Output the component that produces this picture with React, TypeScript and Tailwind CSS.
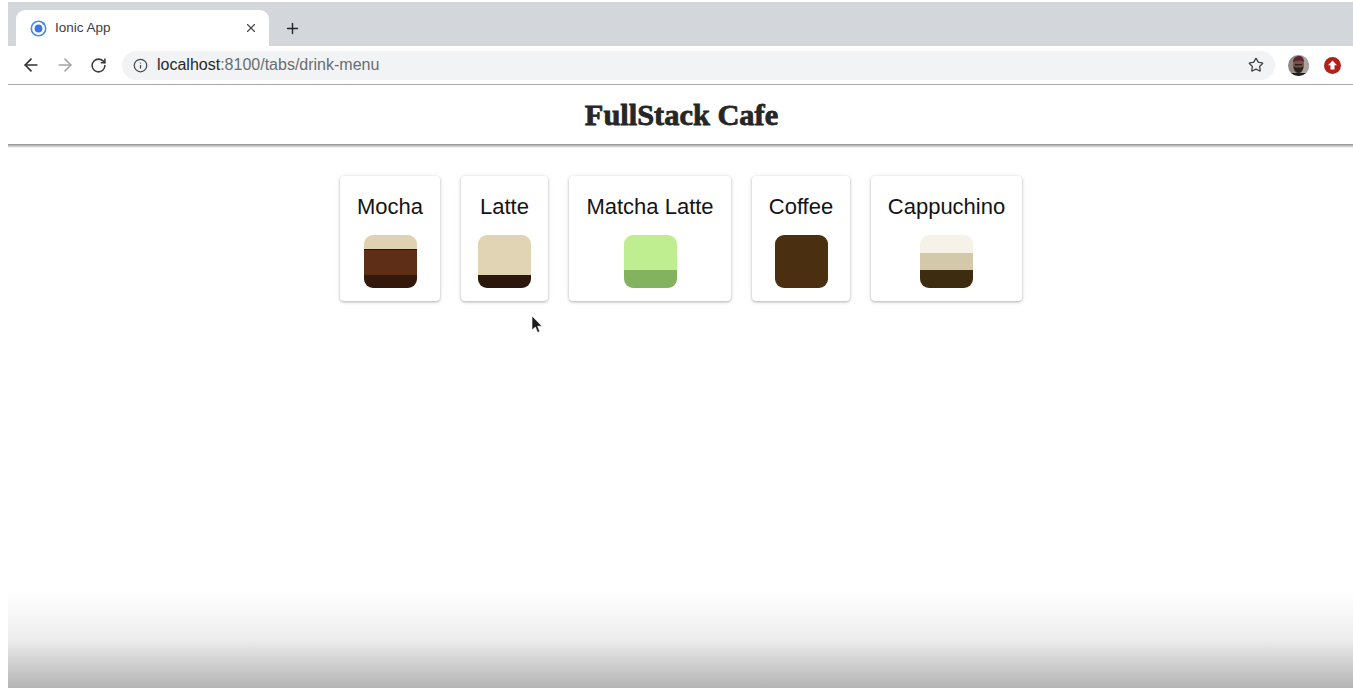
import { ArrowLeft, ArrowRight, Info, Plus, RotateCw, Star, X } from 'lucide-react';

type Layer = { className: string };

type Drink = {
  name: string;
  width: string;
  layers: Layer[];
};

const drinks: Drink[] = [
  {
    name: 'Mocha',
    width: 'w-[100px]',
    layers: [
      { className: 'h-[14px] bg-[#dfd2b2]' },
      { className: 'h-[1px] bg-[#2e1709]' },
      { className: 'h-[25px] bg-[#5f2e16]' },
      { className: 'h-[13px] bg-[#33190c]' }
    ]
  },
  {
    name: 'Latte',
    width: 'w-[87px]',
    layers: [
      { className: 'h-[40px] bg-[#e0d4b4]' },
      { className: 'h-[13px] bg-[#2c170c]' }
    ]
  },
  {
    name: 'Matcha Latte',
    width: 'w-[162px]',
    layers: [
      { className: 'h-[35px] bg-[#bfee90]' },
      { className: 'h-[18px] bg-[#84b35f]' }
    ]
  },
  {
    name: 'Coffee',
    width: 'w-[98px]',
    layers: [{ className: 'h-[53px] bg-[#4a2f11]' }]
  },
  {
    name: 'Cappuchino',
    width: 'w-[151px]',
    layers: [
      { className: 'h-[18px] bg-[#f6f2e7]' },
      { className: 'h-[17px] bg-[#d4c8aa]' },
      { className: 'h-[18px] bg-[#3d2c10]' }
    ]
  }
];

const IonicLogo = () => (
  <svg width="17" height="17" viewBox="0 0 17 17">
    <circle cx="8.5" cy="8.5" r="7.2" fill="none" stroke="#4a8bec" strokeWidth="1.6" />
    <circle cx="8.5" cy="8.5" r="3.9" fill="#3f74e4" />
    <circle cx="13.4" cy="3.6" r="1.2" fill="#4a8bec" />
  </svg>
);

const Avatar = () => (
  <svg width="21" height="21" viewBox="0 0 21 21">
    <clipPath id="avatar-clip">
      <circle cx="10.5" cy="10.5" r="10.5" />
    </clipPath>
    <g clipPath="url(#avatar-clip)">
      <rect width="21" height="21" fill="#8f8a85" />
      <rect x="14" width="7" height="21" fill="#a9a49e" />
      <ellipse cx="10.5" cy="9.5" rx="5.5" ry="7" fill="#7a4f45" />
      <path d="M5 7c0-4 3-6 6-6s5 2 5 6c-3-2-7-2-11 0z" fill="#5a2630" />
      <path d="M5.5 11c1 1 2 1.5 5 1.5s4-.5 5-1.5c0 4-2 7-5 7s-5-3-5-7z" fill="#2b2220" />
      <rect x="7" y="9" width="7" height="1.4" fill="#2b2220" />
      <rect x="3" y="18" width="15" height="3" fill="#24201f" />
    </g>
  </svg>
);

const UpdateBadge = () => (
  <svg width="17" height="17" viewBox="0 0 17 17">
    <circle cx="8.5" cy="8.5" r="8.5" fill="#b3201c" />
    <path d="M8.5 3.6 13 8.2h-2.5v4.2h-4V8.2H4z" fill="#fff" />
  </svg>
);

const Cursor = () => (
  <svg width="13" height="20" viewBox="0 0 13 20">
    <path d="M1 1v14l3.4-3 2.2 5.4 2.2-1-2.2-5.2h4.4z" fill="#1c1c1c" stroke="#ffffff" strokeWidth="0.6" />
  </svg>
);

const DrinkCard = ({ drink }: { drink: Drink }) => (
  <div
    className={`${drink.width} flex h-[125px] flex-col items-center rounded-[4px] bg-white pt-[18px] shadow-[0_1px_3px_rgba(0,0,0,0.3),0_0_8px_rgba(0,0,0,0.04)]`}
  >
    <div className="h-[26px] whitespace-nowrap text-[22px] leading-[26px] text-[#141414]">
      {drink.name}
    </div>
    <div className="mt-[15px] flex h-[53px] w-[53px] flex-col overflow-hidden rounded-[9px]">
      {drink.layers.map((layer, index) => (
        <div key={index} className={layer.className} />
      ))}
    </div>
  </div>
);

export default function App() {
  return (
    <div className="relative h-[688px] w-[1353px] overflow-hidden bg-white pl-2 pt-[2px] font-['Liberation_Sans',Arial,sans-serif]">
      {/* tab strip */}
      <div className="flex h-[44px] items-end bg-[#d3d6da] pl-2">
        <div className="relative flex h-[36px] w-[253px] items-center rounded-t-[9px] bg-white pl-[14px] pr-[11px]">
          <IonicLogo />
          <span className="ml-2 text-[13.5px] text-[#3c4043]">Ionic App</span>
          <X className="ml-auto text-[#45484b]" size={14} strokeWidth={2} />
        </div>
        <div className="ml-[15px] flex h-[36px] items-center">
          <Plus className="text-[#26282a]" size={17} strokeWidth={2} />
        </div>
      </div>

      {/* toolbar */}
      <div className="flex h-[39px] items-center border-b border-[#a9a9a9] bg-white pl-[13px] pr-[11px]">
        <ArrowLeft className="text-[#2f3133]" size={20} strokeWidth={2} />
        <ArrowRight className="ml-[14px] text-[#a3a5a8]" size={20} strokeWidth={2} />
        <RotateCw className="ml-[15px] text-[#3a3c3f]" size={17} strokeWidth={2.2} />
        <div className="ml-[15px] flex h-[29px] w-[1153px] items-center rounded-full bg-[#f1f3f4] pl-[11px] pr-[11px]">
          <Info className="text-[#45484b]" size={15} strokeWidth={2} />
          <span className="ml-[9px] text-[16px] text-[#26282a]">
            localhost<span className="text-[#6a6d70]">:8100/tabs/drink-menu</span>
          </span>
          <Star className="ml-auto text-[#45484b]" size={16} strokeWidth={2} />
        </div>
        <div className="ml-[13px]">
          <Avatar />
        </div>
        <div className="ml-[15px]">
          <UpdateBadge />
        </div>
      </div>

      {/* app header */}
      <div className="flex h-[59px] items-center justify-center bg-white pl-[2px] pt-[3px]">
        <h1 className="font-['Liberation_Serif',Georgia,serif] text-[30.4px] font-bold text-[#262626] [-webkit-text-stroke:0.8px_#262626]">
          FullStack Cafe
        </h1>
      </div>
      <div className="h-[4px] bg-gradient-to-b from-[#8f8f8f] to-white" />

      {/* drink menu */}
      <div className="flex justify-center gap-[21px] pl-[1px] pt-[28px]">
        {drinks.map((drink) => (
          <DrinkCard key={drink.name} drink={drink} />
        ))}
      </div>

      {/* mouse pointer */}
      <div className="absolute left-[531px] top-[315px]">
        <Cursor />
      </div>

      {/* video fade at the bottom */}
      <div className="absolute bottom-0 left-2 right-0 h-[98px] bg-gradient-to-b from-white/0 via-[#e6e6e6]/70 to-[#b4b4b4]" />
    </div>
  );
}
